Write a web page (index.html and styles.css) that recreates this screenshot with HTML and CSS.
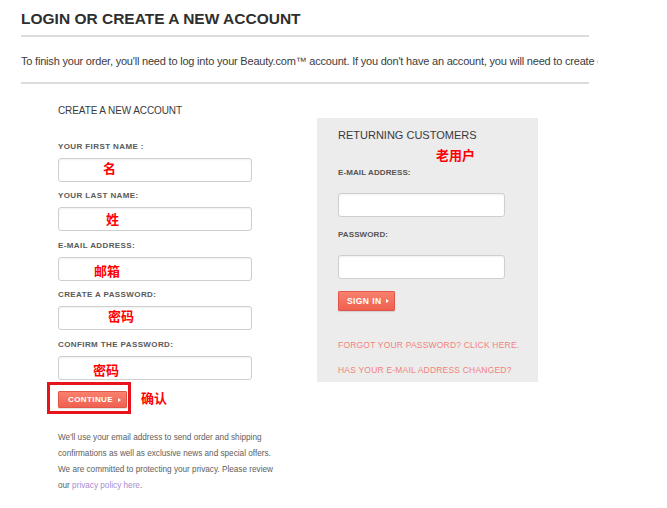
FILE: index.html
```html
<!DOCTYPE html>
<html lang="en">
<head>
<meta charset="utf-8">
<title>Login or Create a New Account</title>
<link rel="stylesheet" href="styles.css">
</head>
<body>
<div class="page">
  <h1 class="title">LOGIN OR CREATE A NEW ACCOUNT</h1>
  <hr class="rule">
  <p class="intro">To finish your order, you'll need to log into your Beauty.com™ account. If you don't have an account, you will need to create one.</p>
  <hr class="rule">
  <div class="columns">
    <section class="create">
      <h2 class="create-title">CREATE A NEW ACCOUNT</h2>
      <div class="field">
        <div class="label">YOUR FIRST NAME :</div>
        <div class="input"><span class="note n-first">名</span></div>
      </div>
      <div class="field">
        <div class="label">YOUR LAST NAME:</div>
        <div class="input"><span class="note n-last">姓</span></div>
      </div>
      <div class="field">
        <div class="label">E-MAIL ADDRESS:</div>
        <div class="input"><span class="note n-email">邮箱</span></div>
      </div>
      <div class="field">
        <div class="label">CREATE A PASSWORD:</div>
        <div class="input"><span class="note n-pw">密码</span></div>
      </div>
      <div class="field field-last">
        <div class="label">CONFIRM THE PASSWORD:</div>
        <div class="input"><span class="note n-pw2">密码</span></div>
      </div>
      <div class="actions">
        <button class="btn btn-continue" type="button">CONTINUE<span class="arrow"></span></button>
        <span class="mark-box"></span>
        <span class="note n-confirm">确认</span>
      </div>
      <p class="legal">We'll use your email address to send order and shipping<br>confirmations as well as exclusive news and special offers.<br>We are committed to protecting your privacy. Please review<br>our <a class="legal-link" href="#">privacy policy here</a>.</p>
    </section>
    <section class="returning">
      <h2 class="ret-title">RETURNING CUSTOMERS</h2>
      <span class="note n-old">老用户</span>
      <div class="ret-label ret-label-first">E-MAIL ADDRESS:</div>
      <div class="input ret-input"></div>
      <div class="ret-label">PASSWORD:</div>
      <div class="input ret-input"></div>
      <button class="btn btn-signin" type="button">SIGN IN<span class="arrow"></span></button>
      <a class="ret-link ret-link-first" href="#">FORGOT YOUR PASSWORD? CLICK HERE.</a>
      <a class="ret-link" href="#">HAS YOUR E-MAIL ADDRESS CHANGED?</a>
    </section>
  </div>
</div>
</body>
</html>
```
FILE: styles.css
```css
* { box-sizing: border-box; }
html, body { margin: 0; padding: 0; background: #fff; }
body {
  font-family: "Liberation Sans", Arial, sans-serif;
  color: #333;
  width: 667px;
  height: 508px;
  overflow: hidden;
}
.page {
  padding: 10px 0 0 21px;
}
.title {
  margin: 0;
  font-size: 15.5px;
  line-height: 18px;
  font-weight: bold;
  color: #2e2e2e;
}
.rule {
  margin: 7px 0 0 0;
  width: 568px;
  height: 2px;
  border: 0;
  background: #dcdcdc;
}
.intro {
  margin: 17.5px 0 14.5px 0;
  width: 577px;
  font-size: 11px;
  line-height: 13px;
  letter-spacing: -0.2px;
  color: #3c3c3c;
  white-space: nowrap;
  overflow: hidden;
}
.columns {
  display: flex;
  align-items: flex-start;
}
.create {
  margin-left: 37px;
  width: 259px;
  padding-top: 20px;
}
.create-title {
  margin: 0 0 23.5px 0;
  font-size: 10px;
  line-height: 13px;
  font-weight: normal;
  letter-spacing: -0.1px;
  color: #3a3a3a;
}
.field {
  margin-bottom: 8.5px;
}
.field-last { margin-bottom: 0; }
.label {
  font-size: 8px;
  line-height: 11px;
  font-weight: bold;
  letter-spacing: 0.4px;
  color: #5a5a5a;
  margin-bottom: 6px;
}
.input {
  position: relative;
  width: 194px;
  height: 24px;
  background: #fff;
  border: 1px solid #cfcfcf;
  border-radius: 3px;
  box-shadow: inset 0 1px 2px rgba(0, 0, 0, 0.06);
}
.note {
  position: absolute;
  font-family: "Noto Sans CJK SC", sans-serif;
  font-size: 13px;
  line-height: 13px;
  font-weight: bold;
  color: #ff0000;
  white-space: nowrap;
}
.n-first { left: 44px; top: 2px; }
.n-last { left: 47px; top: 4px; }
.n-email { left: 35px; top: 6px; }
.n-pw { left: 49px; top: 2px; }
.n-pw2 { left: 34px; top: 6px; }
.actions {
  position: relative;
  margin-top: 11.5px;
  height: 17px;
}
.btn {
  display: flex;
  align-items: center;
  margin: 0;
  border: 1px solid #e2574a;
  border-radius: 1px;
  background: linear-gradient(#f9806d, #ef6150);
  color: #fff;
  font-family: "Liberation Sans", Arial, sans-serif;
  font-weight: bold;
  letter-spacing: 0.4px;
  cursor: pointer;
  box-shadow: 0 1px 1px rgba(0, 0, 0, 0.12);
}
.arrow {
  display: inline-block;
  width: 0;
  height: 0;
  border-top: 2.5px solid transparent;
  border-bottom: 2.5px solid transparent;
  border-left: 3px solid #fff;
}
.btn-continue {
  width: 69px;
  height: 17px;
  padding: 0 0 0 9px;
  font-size: 8px;
}
.btn-continue .arrow { margin-left: 5px; }
.mark-box {
  position: absolute;
  left: -11px;
  top: -9px;
  width: 84px;
  height: 32px;
  border: 3px solid #e8141b;
}
.n-confirm { left: 83px; top: 0; }
.legal {
  margin: 21.8px 0 0 0;
  font-size: 8.2px;
  line-height: 16px;
  color: #5e5e5e;
  white-space: nowrap;
}
.legal-link {
  color: #a98bd0;
  text-decoration: none;
}
.returning {
  position: relative;
  margin-top: 34px;
  width: 221px;
  height: 264px;
  background: #ececec;
  padding: 10.8px 21px 0 21px;
}
.ret-title {
  margin: 0;
  font-size: 11px;
  line-height: 13px;
  font-weight: normal;
  color: #3a3a3a;
}
.n-old { left: 119px; top: 30px; }
.ret-label {
  margin: 12px 0 15.4px 0;
  font-size: 8px;
  line-height: 11px;
  font-weight: bold;
  letter-spacing: 0.1px;
  color: #555;
}
.ret-label-first { margin-top: 24.8px; }
.ret-input {
  width: 167px;
}
.btn-signin {
  margin-top: 12px;
  width: 57px;
  height: 20px;
  padding: 0 0 0 8px;
  font-size: 8.5px;
}
.btn-signin .arrow { margin-left: 5px; }
.ret-link {
  display: block;
  margin-top: 14px;
  font-size: 8.5px;
  line-height: 11px;
  letter-spacing: 0.2px;
  color: #f3827c;
  text-decoration: none;
  white-space: nowrap;
}
.ret-link-first { margin-top: 28.8px; }
```
